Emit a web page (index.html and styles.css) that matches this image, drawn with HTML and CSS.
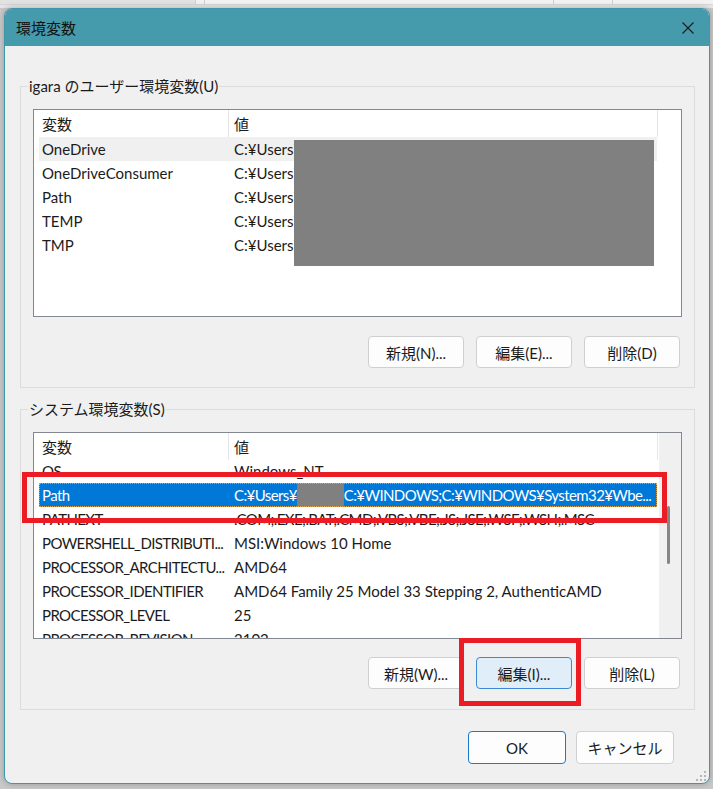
FILE: index.html
```html
<!DOCTYPE html>
<html lang="ja">
<head>
  <meta charset="UTF-8">
  <title>環境変数</title>
  <link rel="stylesheet" href="styles.css">
</head>
<body>
  <div class="desk_top">
    <div class="desk_cell w1"></div>
    <div class="desk_cell w2"></div>
    <div class="desk_cell w3"></div>
    <div class="desk_cell w4"></div>
    <div class="desk_cell w5"></div>
  </div>

  <div class="dialog">
    <div class="title_bar">
      <span class="title">環境変数</span>
      <svg class="close_icon" width="12" height="12" viewBox="0 0 12 12">
        <path d="M0.5 0.5 L11.5 11.5 M11.5 0.5 L0.5 11.5" stroke="#1b1b1b" stroke-width="1.1" fill="none"/>
      </svg>
    </div>

    <div class="dialog_body">
      <fieldset class="group">
        <legend>igara のユーザー環境変数(U)</legend>
        <div class="list">
          <div class="list_main">
            <div class="list_head">
              <div class="head_name">変数</div>
              <div class="head_value">値</div>
            </div>
            <div class="row hover"><div class="cell_name">OneDrive</div><div class="cell_value">C:¥Users¥</div></div>
            <div class="row"><div class="cell_name">OneDriveConsumer</div><div class="cell_value">C:¥Users¥</div></div>
            <div class="row"><div class="cell_name">Path</div><div class="cell_value">C:¥Users¥</div></div>
            <div class="row"><div class="cell_name">TEMP</div><div class="cell_value">C:¥Users¥</div></div>
            <div class="row"><div class="cell_name">TMP</div><div class="cell_value">C:¥Users¥</div></div>
          </div>
          <div class="redact_big"></div>
        </div>
        <div class="btn_row">
          <button type="button" class="btn">新規(N)...</button>
          <button type="button" class="btn">編集(E)...</button>
          <button type="button" class="btn">削除(D)</button>
        </div>
      </fieldset>

      <fieldset class="group second">
        <legend>システム環境変数(S)</legend>
        <div class="list short">
          <div class="list_main">
            <div class="list_head">
              <div class="head_name">変数</div>
              <div class="head_value">値</div>
            </div>
            <div class="rows_scrolled">
              <div class="row"><div class="cell_name">OS</div><div class="cell_value">Windows_NT</div></div>
              <div class="row selected"><div class="cell_name">Path</div><div class="cell_value tight">C:¥Users¥<span class="redact_small"></span>C:¥WINDOWS;C:¥WINDOWS¥System32¥Wbe...</div></div>
              <div class="row"><div class="cell_name">PATHEXT</div><div class="cell_value tight">.COM;.EXE;.BAT;.CMD;.VBS;.VBE;.JS;.JSE;.WSF;.WSH;.MSC</div></div>
              <div class="row"><div class="cell_name">POWERSHELL_DISTRIBUTI...</div><div class="cell_value">MSI:Windows 10 Home</div></div>
              <div class="row"><div class="cell_name">PROCESSOR_ARCHITECTU...</div><div class="cell_value">AMD64</div></div>
              <div class="row"><div class="cell_name">PROCESSOR_IDENTIFIER</div><div class="cell_value">AMD64 Family 25 Model 33 Stepping 2, AuthenticAMD</div></div>
              <div class="row"><div class="cell_name">PROCESSOR_LEVEL</div><div class="cell_value">25</div></div>
              <div class="row"><div class="cell_name">PROCESSOR_REVISION</div><div class="cell_value">2102</div></div>
            </div>
          </div>
          <div class="scrollbar"><div class="thumb"></div></div>
        </div>
        <div class="btn_row">
          <button type="button" class="btn">新規(W)...</button>
          <button type="button" class="btn focused">編集(I)...</button>
          <button type="button" class="btn">削除(L)</button>
        </div>
      </fieldset>

      <div class="footer">
        <button type="button" class="btn wide default">OK</button>
        <button type="button" class="btn wide">キャンセル</button>
      </div>
    </div>

    <div class="mark mark_row"></div>
    <div class="mark mark_btn"></div>

    <svg class="grip" width="12" height="12" viewBox="0 0 12 12">
      <rect x="9" y="1" width="2" height="2" fill="#b4b4b4"/>
      <rect x="5" y="5" width="2" height="2" fill="#b4b4b4"/>
      <rect x="9" y="5" width="2" height="2" fill="#b4b4b4"/>
      <rect x="1" y="9" width="2" height="2" fill="#b4b4b4"/>
      <rect x="5" y="9" width="2" height="2" fill="#b4b4b4"/>
      <rect x="9" y="9" width="2" height="2" fill="#b4b4b4"/>
    </svg>
  </div>
</body>
</html>
```

FILE: styles.css
```css
* {
	box-sizing: border-box;
}

body {
	margin: 0;
	width: 713px;
	height: 789px;
	overflow: hidden;
	background-color: #c9c9c9;
	font-family: "Lato", "Noto Sans CJK JP", sans-serif;
	font-size: 15px;
	color: #1b1b1b;
}

.desk_top {
	display: flex;
	height: 8px;
	background-color: #e6e6e6;
}

.desk_cell {
	height: 5px;
	border-right: 1px solid #cfcfcf;
	border-bottom: 1px solid #d6d6d6;
	background-color: #f2f2f2;
}

.w1 { width: 196px; background-color: #e2e2e2; }
.w2 { width: 9px; }
.w3 { width: 349px; }
.w4 { width: 59px; }
.w5 { flex: 1; border-right: none; }

.dialog {
	position: relative;
	width: 706px;
	height: 776px;
	margin-left: 4px;
	border: 1px solid #3f97a9;
	border-radius: 8px;
	overflow: hidden;
	background-color: #f0f0f0;
	box-shadow: 0px 0px 6px rgb(0 0 0 / 25%);
}

.title_bar {
	height: 37px;
	display: flex;
	align-items: center;
	justify-content: space-between;
	padding: 0 15px 0 11px;
	background-color: #459aac;
}

.title {
	font-size: 15px;
	color: #111;
}

.dialog_body {
	padding: 30px 14px 0 15px;
}

.group {
	margin: 0;
	padding: 13px 12px 19px 12px;
	border: 1px solid #dcdcdc;
	min-width: 0;
}

.group legend {
	margin-left: -5px;
	padding: 0 1px;
	line-height: 20px;
	font-size: 15px;
}

.group.second {
	margin-top: 11px;
	padding-bottom: 20px;
}

.list {
	position: relative;
	display: flex;
	height: 208px;
	border: 1px solid #828790;
	background-color: white;
	overflow: hidden;
}

.list.short {
	height: 207px;
}

.list_main {
	flex: 1;
	overflow: hidden;
}

.list_head {
	display: flex;
	width: 624px;
	height: 27px;
	line-height: 29px;
	border-right: 1px solid #e5e5e5;
	background-color: white;
	position: relative;
	z-index: 1;
}

.head_name {
	width: 195px;
	padding-left: 8px;
	border-right: 1px solid #e5e5e5;
}

.head_value {
	padding-left: 5px;
}

.rows_scrolled {
	margin-top: -1px;
}

.rows_scrolled .cell_name,
.tight {
	letter-spacing: -0.6px;
}

.row {
	display: flex;
	width: 618px;
	height: 24px;
	line-height: 24px;
	margin-left: 5px;
	white-space: nowrap;
}

.row.hover {
	background-color: #f0f0f0;
}

.row.selected {
	background-color: #0078d7;
	color: white;
	outline: 1px dotted #e0a050;
	outline-offset: -1px;
}

.cell_name {
	width: 189px;
	padding-left: 3px;
	overflow: hidden;
}

.cell_value {
	flex: 1;
	padding-left: 6px;
	overflow: hidden;
}

.redact_small {
	display: inline-block;
	width: 47px;
	height: 25px;
	margin-top: -1px;
	vertical-align: top;
	background-color: #808080;
}

.redact_big {
	position: absolute;
	left: 260px;
	top: 30px;
	width: 360px;
	height: 126px;
	background-color: #808080;
}

.scrollbar {
	width: 22px;
	padding: 73px 0 0 8px;
	background-color: #f0f0f0;
}

.thumb {
	width: 3px;
	height: 58px;
	border-radius: 2px;
	background-color: #858585;
}

.btn_row {
	display: flex;
	justify-content: flex-end;
	gap: 12px;
	margin-top: 19px;
	padding-right: 2px;
}

.group.second .btn_row {
	margin-top: 18px;
}

.btn {
	width: 96px;
	height: 32px;
	padding: 0;
	border: 1px solid #d0d0d0;
	border-radius: 4px;
	background-color: #fdfdfd;
	font-family: inherit;
	font-size: 15px;
	color: #1b1b1b;
}

.btn.focused {
	background-color: #e0eef9;
	border-color: #3a8ad6;
}

.footer {
	display: flex;
	justify-content: flex-end;
	gap: 10px;
	margin-top: 21px;
	padding-right: 21px;
}

.btn.wide {
	width: 98px;
	height: 33px;
}

.btn.default {
	border-color: #1a7acc;
}

.mark {
	position: absolute;
	border: 5px solid #ec1c24;
}

.mark_row {
	left: 17px;
	top: 463px;
	width: 645px;
	height: 51px;
}

.mark_btn {
	left: 454px;
	top: 629px;
	width: 122px;
	height: 68px;
}

.grip {
	position: absolute;
	right: 2px;
	bottom: 1px;
}
```
